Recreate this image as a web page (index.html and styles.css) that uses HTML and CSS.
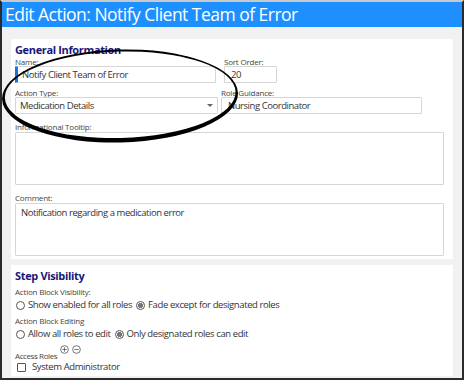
FILE: index.html
```html
<!DOCTYPE html>
<html lang="en">
<head>
    <meta charset="UTF-8">
    <title>Edit Action</title>
    <link rel="stylesheet" href="styles.css">
</head>
<body>
    <div class="window">
        <div class="title-bar">Edit Action: Notify Client Team of Error</div>
        <div class="content">
            <section class="panel general">
                <h3>General Information</h3>
                <div class="row">
                    <div class="field name">
                        <label>Name:</label>
                        <input class="focused" type="text" value="Notify Client Team of Error">
                    </div>
                    <div class="field sort">
                        <label>Sort Order:</label>
                        <input type="text" value="20">
                    </div>
                </div>
                <div class="row">
                    <div class="field type">
                        <label>Action Type:</label>
                        <div class="select-wrap">
                            <select><option>Medication Details</option></select>
                            <span class="caret"></span>
                        </div>
                    </div>
                    <div class="field role">
                        <label>Role Guidance:</label>
                        <input type="text" value="Nursing Coordinator">
                    </div>
                </div>
                <div class="field wide">
                    <label>Informational Tooltip:</label>
                    <textarea></textarea>
                </div>
                <div class="field wide">
                    <label>Comment:</label>
                    <textarea>Notification regarding a medication error</textarea>
                </div>
            </section>

            <section class="panel visibility">
                <h3>Step Visibility</h3>
                <label class="small">Action Block Visibility:</label>
                <div class="options">
                    <label><input type="radio" name="vis"> Show enabled for all roles</label>
                    <label><input type="radio" name="vis" checked> Fade except for designated roles</label>
                </div>
                <label class="small">Action Block Editing</label>
                <div class="options">
                    <label><input type="radio" name="edit"> Allow all roles to edit</label>
                    <label><input type="radio" name="edit" checked> Only designated roles can edit</label>
                </div>
                <div class="roles-head">
                    <span class="small">Access Roles</span>
                    <svg class="icon" viewBox="0 0 10 10"><circle cx="5" cy="5" r="4.3"/><path d="M5 2.6v4.8M2.6 5h4.8"/></svg>
                    <svg class="icon" viewBox="0 0 10 10"><circle cx="5" cy="5" r="4.3"/><path d="M2.6 5h4.8"/></svg>
                </div>
                <label class="check"><input type="checkbox"> System Administrator</label>
            </section>
        </div>

        <!-- hand drawn highlight on top of the screenshot -->
        <svg class="annotation" width="464" height="380" viewBox="0 0 464 380">
            <path fill-rule="evenodd" d="M2 96a118 46.5 0 1 0 236 0a118 46.5 0 1 0 -236 0Z M4.8 94.8a115.4 43.2 0 1 0 230.8 0a115.4 43.2 0 1 0 -230.8 0Z" transform="rotate(-1.5 120 95)"/>
        </svg>
    </div>
</body>
</html>
```

FILE: styles.css
```css
body {
    margin: 0;
    padding: 0;
    font-family: "Open Sans", "Noto Sans", sans-serif;
    color: #333;
}

.window {
    position: relative;
    width: 464px;
    height: 380px;
    box-sizing: border-box;
    border: 2px solid #2b2b2b;
    border-top-color: #c9c9c9;
    background: #f1f1f1;
    overflow: hidden;
}

.title-bar {
    height: 25px;
    line-height: 24px;
    padding-left: 3px;
    background: #1e8fff;
    color: #fff;
    font-size: 17.5px;
    letter-spacing: -0.52px;
    white-space: nowrap;
}

.content {
    padding: 12px 9px 0;
}

.panel {
    background: #fff;
    padding: 4px 9px 3px 4px;
}
.panel + .panel {
    margin-top: 6px;
}

h3 {
    margin: 0;
    font-size: 11px;
    line-height: 14px;
    color: #17177a;
    letter-spacing: -0.35px;
}

label, .small {
    display: block;
    font-size: 8px;
    line-height: 9px;
    color: #444;
    letter-spacing: -0.2px;
}

.row {
    display: flex;
    margin-bottom: 5px;
}

input[type=text], select, textarea {
    display: block;
    box-sizing: border-box;
    margin: 0;
    border: 1px solid #d6d6d6;
    border-radius: 1px;
    background: #fff;
    font-family: inherit;
    font-size: 9.5px;
    letter-spacing: -0.45px;
    color: #333;
    outline: none;
}

input[type=text], select {
    height: 17px;
    padding: 0 0 0 6px;
}

input.focused {
    border-left: 3px solid #1a73e0;
    padding-left: 4px;
}

.name { width: 201px; margin-right: 8px; }
.sort { width: 53px; }
.type { width: 203px; margin-right: 3px; }
.role { width: 201px; }

.name input, .sort input, .role input, .select-wrap { width: 100%; }

.select-wrap {
    position: relative;
}
select {
    width: 100%;
    appearance: none;
    -webkit-appearance: none;
    padding-left: 4px;
}
.caret {
    position: absolute;
    right: 5px;
    top: 7px;
    border-left: 3px solid transparent;
    border-right: 3px solid transparent;
    border-top: 3px solid #666;
}

.wide {
    margin-top: 8px;
}
.wide label {
    margin-bottom: 1px;
}
textarea {
    width: 429px;
    height: 53px;
    resize: none;
    padding: 2px 5px;
    line-height: 13px;
}

.visibility {
    height: 111px;
    box-sizing: border-box;
    padding-top: 4px;
}
.visibility h3 {
    margin-bottom: 4px;
}
.options {
    display: flex;
    gap: 4px;
    margin: 3px 0 5px 1px;
}
.options label, .check {
    display: flex;
    align-items: center;
    gap: 3px;
    font-size: 9.5px;
    line-height: 12px;
    color: #333;
    letter-spacing: -0.4px;
}

input[type=radio] {
    appearance: none;
    -webkit-appearance: none;
    margin: 0;
    width: 9px;
    height: 9px;
    border: 1px solid #555;
    border-radius: 50%;
    box-sizing: border-box;
    background: #fff;
}
input[type=radio]:checked {
    background: radial-gradient(circle, #777 0 2.3px, #fff 2.8px);
}

.roles-head {
    display: flex;
    align-items: flex-start;
    gap: 3px;
    margin-top: 5px;
}
.roles-head .small {
    margin-top: 6px;
    letter-spacing: -0.4px;
}
.icon {
    width: 9px;
    height: 9px;
    fill: none;
    stroke: #555;
    stroke-width: 0.9;
}

.check {
    margin: 1px 0 0 2px;
}
input[type=checkbox] {
    appearance: none;
    -webkit-appearance: none;
    margin: 0 3px 0 0;
    width: 9px;
    height: 9px;
    border: 1px solid #555;
    border-radius: 1px;
    background: #fff;
}

.annotation {
    position: absolute;
    left: -2px;
    top: -2px;
    fill: #000;
}
```
